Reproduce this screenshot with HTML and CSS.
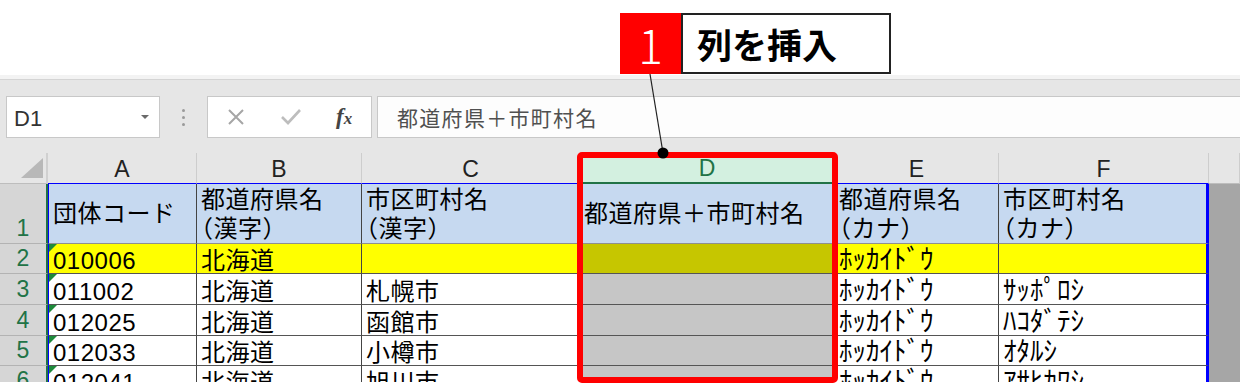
FILE: index.html
```html
<!DOCTYPE html>
<html lang="ja">
<head>
    <meta charset="UTF-8">
    <meta name="viewport" content="width=device-width, initial-scale=1.0">
    <title>列を挿入</title>
    <link rel="stylesheet" href="styles.css">
</head>
<body>
    <div class="page">
        <div class="ribbon-space"></div>
        <div class="ribbon-edge"></div>

        <div class="formula-bar">
            <div class="name-box"><span>D1</span><span class="drop"></span></div>
            <div class="grip"><i></i><i></i><i></i></div>
            <div class="fx-box">
                <svg class="icon" width="20" height="20" viewBox="0 0 20 20">
                    <path d="M3 3 L17 17 M17 3 L3 17" stroke="#a6a6a6" stroke-width="2" fill="none"/>
                </svg>
                <svg class="icon" width="22" height="20" viewBox="0 0 22 20">
                    <path d="M2 10 L8 16 L20 3" stroke="#bdbdbd" stroke-width="2.6" fill="none"/>
                </svg>
                <span class="fx">f<small>x</small></span>
            </div>
            <div class="formula-input">都道府県＋市町村名</div>
        </div>

        <div class="sheet">
            <!-- column headers -->
            <div class="corner">
                <svg width="22" height="20" viewBox="0 0 22 20"><path d="M22 0 L22 20 L0 20 Z" fill="#b8b8b8"/></svg>
            </div>
            <div class="col-head">A</div>
            <div class="col-head">B</div>
            <div class="col-head">C</div>
            <div class="col-head on">D</div>
            <div class="col-head">E</div>
            <div class="col-head">F</div>
            <div class="col-head rest"></div>

            <!-- row 1 -->
            <div class="row-head">1</div>
            <div class="cell title first"><span>団体コード</span></div>
            <div class="cell title"><span>都道府県名<br><i class="p">（</i>漢字）</span></div>
            <div class="cell title"><span>市区町村名<br><i class="p">（</i>漢字）</span></div>
            <div class="cell title"><span>都道府県＋市町村名</span></div>
            <div class="cell title"><span>都道府県名<br><i class="p">（</i>カナ）</span></div>
            <div class="cell title last"><span>市区町村名<br><i class="p">（</i>カナ）</span></div>
            <div class="out"></div>

            <!-- row 2 -->
            <div class="row-head">2</div>
            <div class="cell hl first flag"><span>010006</span></div>
            <div class="cell hl"><span>北海道</span></div>
            <div class="cell hl"></div>
            <div class="cell hl sel"></div>
            <div class="cell hl kana"><span>ﾎｯｶｲﾄﾞｳ</span></div>
            <div class="cell hl last"></div>
            <div class="out"></div>

            <!-- row 3 -->
            <div class="row-head">3</div>
            <div class="cell first flag"><span>011002</span></div>
            <div class="cell"><span>北海道</span></div>
            <div class="cell"><span>札幌市</span></div>
            <div class="cell sel"></div>
            <div class="cell kana"><span>ﾎｯｶｲﾄﾞｳ</span></div>
            <div class="cell kana last"><span>ｻｯﾎﾟﾛｼ</span></div>
            <div class="out"></div>

            <!-- row 4 -->
            <div class="row-head">4</div>
            <div class="cell first flag"><span>012025</span></div>
            <div class="cell"><span>北海道</span></div>
            <div class="cell"><span>函館市</span></div>
            <div class="cell sel"></div>
            <div class="cell kana"><span>ﾎｯｶｲﾄﾞｳ</span></div>
            <div class="cell kana last"><span>ﾊｺﾀﾞﾃｼ</span></div>
            <div class="out"></div>

            <!-- row 5 -->
            <div class="row-head">5</div>
            <div class="cell first flag"><span>012033</span></div>
            <div class="cell"><span>北海道</span></div>
            <div class="cell"><span>小樽市</span></div>
            <div class="cell sel"></div>
            <div class="cell kana"><span>ﾎｯｶｲﾄﾞｳ</span></div>
            <div class="cell kana last"><span>ｵﾀﾙｼ</span></div>
            <div class="out"></div>

            <!-- row 6 -->
            <div class="row-head">6</div>
            <div class="cell first flag"><span>012041</span></div>
            <div class="cell"><span>北海道</span></div>
            <div class="cell"><span>旭川市</span></div>
            <div class="cell sel"></div>
            <div class="cell kana"><span>ﾎｯｶｲﾄﾞｳ</span></div>
            <div class="cell kana last"><span>ｱｻﾋｶﾜｼ</span></div>
            <div class="out"></div>
        </div>

        <!-- annotation -->
        <div class="select-box"></div>
        <svg class="leader" width="1240" height="386" viewBox="0 0 1240 386">
            <line x1="650" y1="74" x2="663" y2="153" stroke="#222" stroke-width="1.2"/>
            <circle cx="663" cy="153" r="5.5" fill="#000"/>
        </svg>
        <div class="callout">
            <span class="num">1</span>
            <span class="label">列を挿入</span>
        </div>
    </div>
</body>
</html>
```

FILE: styles.css
```css
body {
    margin: 0;
    background: #fff;
    font-family: "Liberation Sans", "Noto Sans CJK JP", sans-serif;
}
.page {
    position: relative;
    width: 1240px;
    height: 386px;
    overflow: hidden;
    background: #fff;
}
.ribbon-space {
    height: 75px;
}
.ribbon-edge {
    height: 4px;
    background: #f3f3f3;
    border-bottom: 1px solid #d4d4d4;
}

/* formula bar */
.formula-bar {
    display: flex;
    height: 42px;
    padding: 16px 0 15px 6px;
    background: #e6e6e6;
}
.name-box {
    box-sizing: border-box;
    width: 154px;
    display: flex;
    align-items: center;
    justify-content: space-between;
    padding: 3px 10px 0 7px;
    background: #fff;
    border: 1px solid #c8c8c8;
    font-size: 22px;
    color: #333;
}
.drop {
    width: 0;
    height: 0;
    margin-top: -4px;
    border-left: 4px solid transparent;
    border-right: 4px solid transparent;
    border-top: 4px solid #6a6a6a;
}
.grip {
    width: 47px;
    display: flex;
    flex-direction: column;
    align-items: center;
    justify-content: center;
    gap: 4px;
}
.grip i {
    width: 3px;
    height: 3px;
    border-radius: 50%;
    background: #9a9a9a;
}
.fx-box {
    box-sizing: border-box;
    width: 165px;
    display: flex;
    align-items: center;
    padding-left: 18px;
    gap: 34px;
    background: #fff;
    border: 1px solid #c8c8c8;
}
.fx {
    font-family: "Liberation Serif", serif;
    font-style: italic;
    font-weight: bold;
    font-size: 23px;
    color: #444;
}
.fx small {
    font-size: 17px;
}
.formula-input {
    flex: 1;
    margin-left: 5px;
    display: flex;
    align-items: center;
    padding-left: 19px;
    background: #fdfdfd;
    border: 1px solid #c8c8c8;
    border-right: none;
    font-family: "Noto Sans CJK JP", sans-serif;
    font-size: 21px;
    letter-spacing: 1.3px;
    color: #505050;
}

/* sheet grid */
.sheet {
    display: grid;
    grid-template-columns: 48px 149px 165px 218px 255px 164px 210px 1fr;
    grid-template-rows: 31px 60px 30px 31px 31px 30px 30px;
    height: 229px;
    overflow: hidden;
    background: #e6e6e6;
}
.corner {
    display: flex;
    align-items: flex-end;
    justify-content: flex-end;
    padding: 0 3px 5px 0;
    border-bottom: 1px solid #bdbdbd;
    border-right: 2px solid #d0d0d0;
}
.col-head {
    display: flex;
    align-items: center;
    justify-content: center;
    padding-top: 2px;
    font-size: 23px;
    color: #222;
    border-right: 1px solid #cdcdcd;
    border-bottom: 1px solid #0000ff;
}
.col-head.on {
    background: #d3f0e0;
    color: #217346;
    border-bottom: 2px solid #217346;
}
.col-head.rest {
    border-bottom-color: #bdbdbd;
}
.row-head {
    display: flex;
    align-items: flex-end;
    justify-content: center;
    padding-bottom: 1px;
    background: #d6d6d6;
    border-right: 2px solid #217346;
    border-bottom: 1px solid #b3b3b3;
    font-size: 23px;
    color: #217346;
}
.cell {
    position: relative;
    display: flex;
    align-items: flex-end;
    padding: 0 0 0 4px;
    background: #fff;
    border-right: 1px solid #444;
    border-bottom: 1px solid #555;
    font-size: 24px;
    line-height: 25px;
    letter-spacing: 0.5px;
    color: #000;
    white-space: nowrap;
}
.cell.title {
    align-items: center;
    line-height: 29px;
    background: #c6d9f0;
    border-bottom-color: #8f8f8f;
}
.cell .p {
    font-style: normal;
    font-feature-settings: "halt";
}
.cell.kana {
    font-size: 27px;
    letter-spacing: 0;
}
.cell.hl {
    background: #ffff00;
}
.cell.sel {
    background: #c6c6c6;
}
.cell.hl.sel {
    background: #c6c600;
}
.cell.first {
    border-left: 1px solid #0000ff;
}
.cell.last {
    border-right: 3px solid #0000ff;
}
.cell.flag::before {
    content: "";
    position: absolute;
    left: 0;
    top: 0;
    border-top: 8px solid #1e8a3a;
    border-right: 8px solid transparent;
}
.out {
    background: #a6a6a6;
}

/* annotation */
.select-box {
    position: absolute;
    left: 577px;
    top: 152px;
    width: 249px;
    height: 219px;
    border: 6px solid #ff0000;
    border-radius: 5px;
}
.leader {
    position: absolute;
    left: 0;
    top: 0;
}
.callout {
    position: absolute;
    left: 620px;
    top: 13px;
    display: flex;
    height: 61px;
}
.callout .num {
    width: 61px;
    display: flex;
    align-items: center;
    justify-content: center;
    background: #ff0000;
    color: #fff;
    font-family: "Noto Sans CJK JP", sans-serif;
    font-weight: 300;
    font-size: 46px;
}
.callout .label {
    box-sizing: border-box;
    width: 210px;
    display: flex;
    align-items: center;
    padding-left: 14px;
    background: #fff;
    border: 2px solid #222;
    font-family: "Noto Sans CJK JP", sans-serif;
    font-weight: bold;
    font-size: 35px;
    color: #000;
}
```
